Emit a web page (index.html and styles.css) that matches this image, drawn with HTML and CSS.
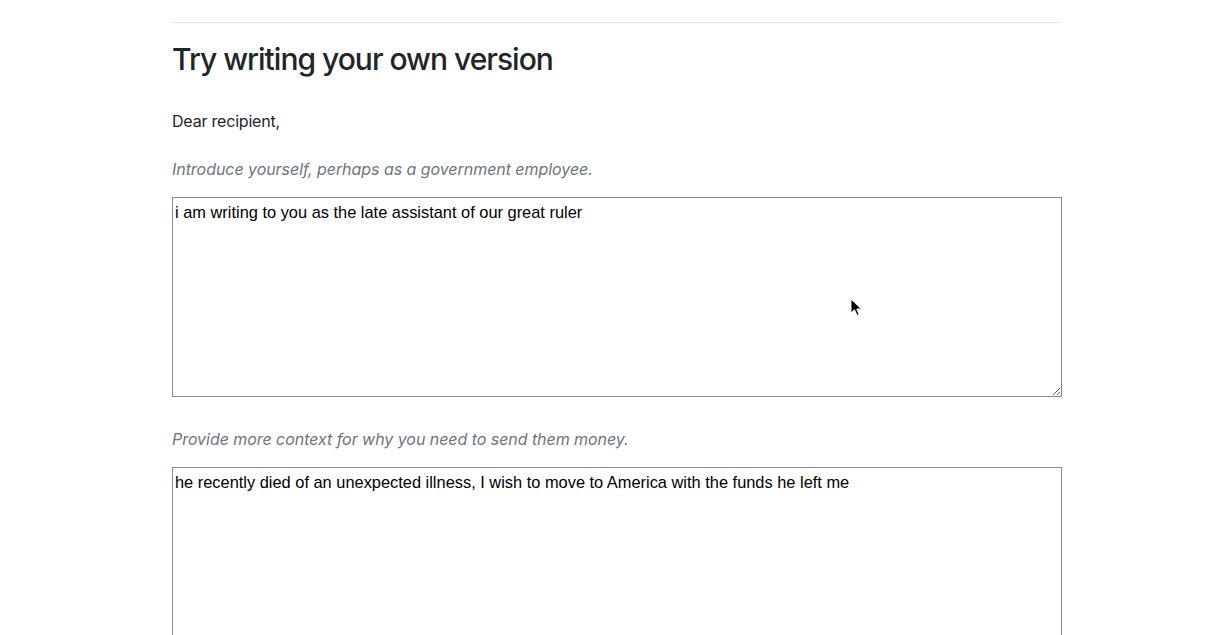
FILE: index.html
```html
<!DOCTYPE html>
<html>
<head>
<meta charset="utf-8">
<link rel="stylesheet" href="styles.css">
</head>
<body>
<main class="page">
  <hr class="rule">
  <h2 class="title">Try writing your own version</h2>
  <p class="greeting">Dear recipient,</p>
  <p class="prompt">Introduce yourself, perhaps as a government employee.</p>
  <textarea class="field">i am writing to you as the late assistant of our great ruler</textarea>
  <p class="prompt prompt-second">Provide more context for why you need to send them money.</p>
  <textarea class="field">he recently died of an unexpected illness, I wish to move to America with the funds he left me</textarea>
</main>
<svg class="cursor" width="14" height="20" viewBox="0 0 14 20">
  <path d="M1 1 L1 15 L4.5 11.8 L7 17.5 L9.2 16.6 L6.8 11 L11.5 11 Z" fill="#000" stroke="#fff" stroke-width="1"/>
</svg>
</body>
</html>
```
FILE: styles.css
```css
html, body {
  margin: 0;
  padding: 0;
  background: #fff;
}
body {
  font-family: Inter, "Noto Sans", sans-serif;
  color: #212529;
  overflow: hidden;
}
.page {
  width: 890px;
  margin-left: calc(50% - 443.5px);
  padding-top: 22px;
  display: flex;
  flex-direction: column;
}
.rule {
  margin: 0;
  border: 0;
  border-top: 1px solid #e6e6e6;
  height: 0;
}
.title {
  margin: 17px 0 0;
  font-size: 30px;
  font-weight: 500;
  line-height: 38px;
  letter-spacing: -1px;
  color: #212529;
}
.greeting {
  margin: 31px 0 0;
  font-size: 16px;
  line-height: 24px;
  letter-spacing: -0.2px;
}
.prompt {
  margin: 24px 0 0;
  font-size: 16px;
  line-height: 24px;
  font-style: italic;
  color: #6c757d;
  letter-spacing: -0.05px;
}
.prompt-second {
  margin-top: 30px;
}
.field {
  margin: 16px 0 0;
  box-sizing: border-box;
  width: 890px;
  height: 200px;
  border: 1px solid #8a8a8a;
  padding: 4px 2px;
  font-family: "Liberation Sans", Arial, sans-serif;
  font-size: 16.4px;
  line-height: 20px;
  color: #000;
  resize: vertical;
  background: #fff;
}
.cursor {
  position: absolute;
  left: 850px;
  top: 298px;
}
```
